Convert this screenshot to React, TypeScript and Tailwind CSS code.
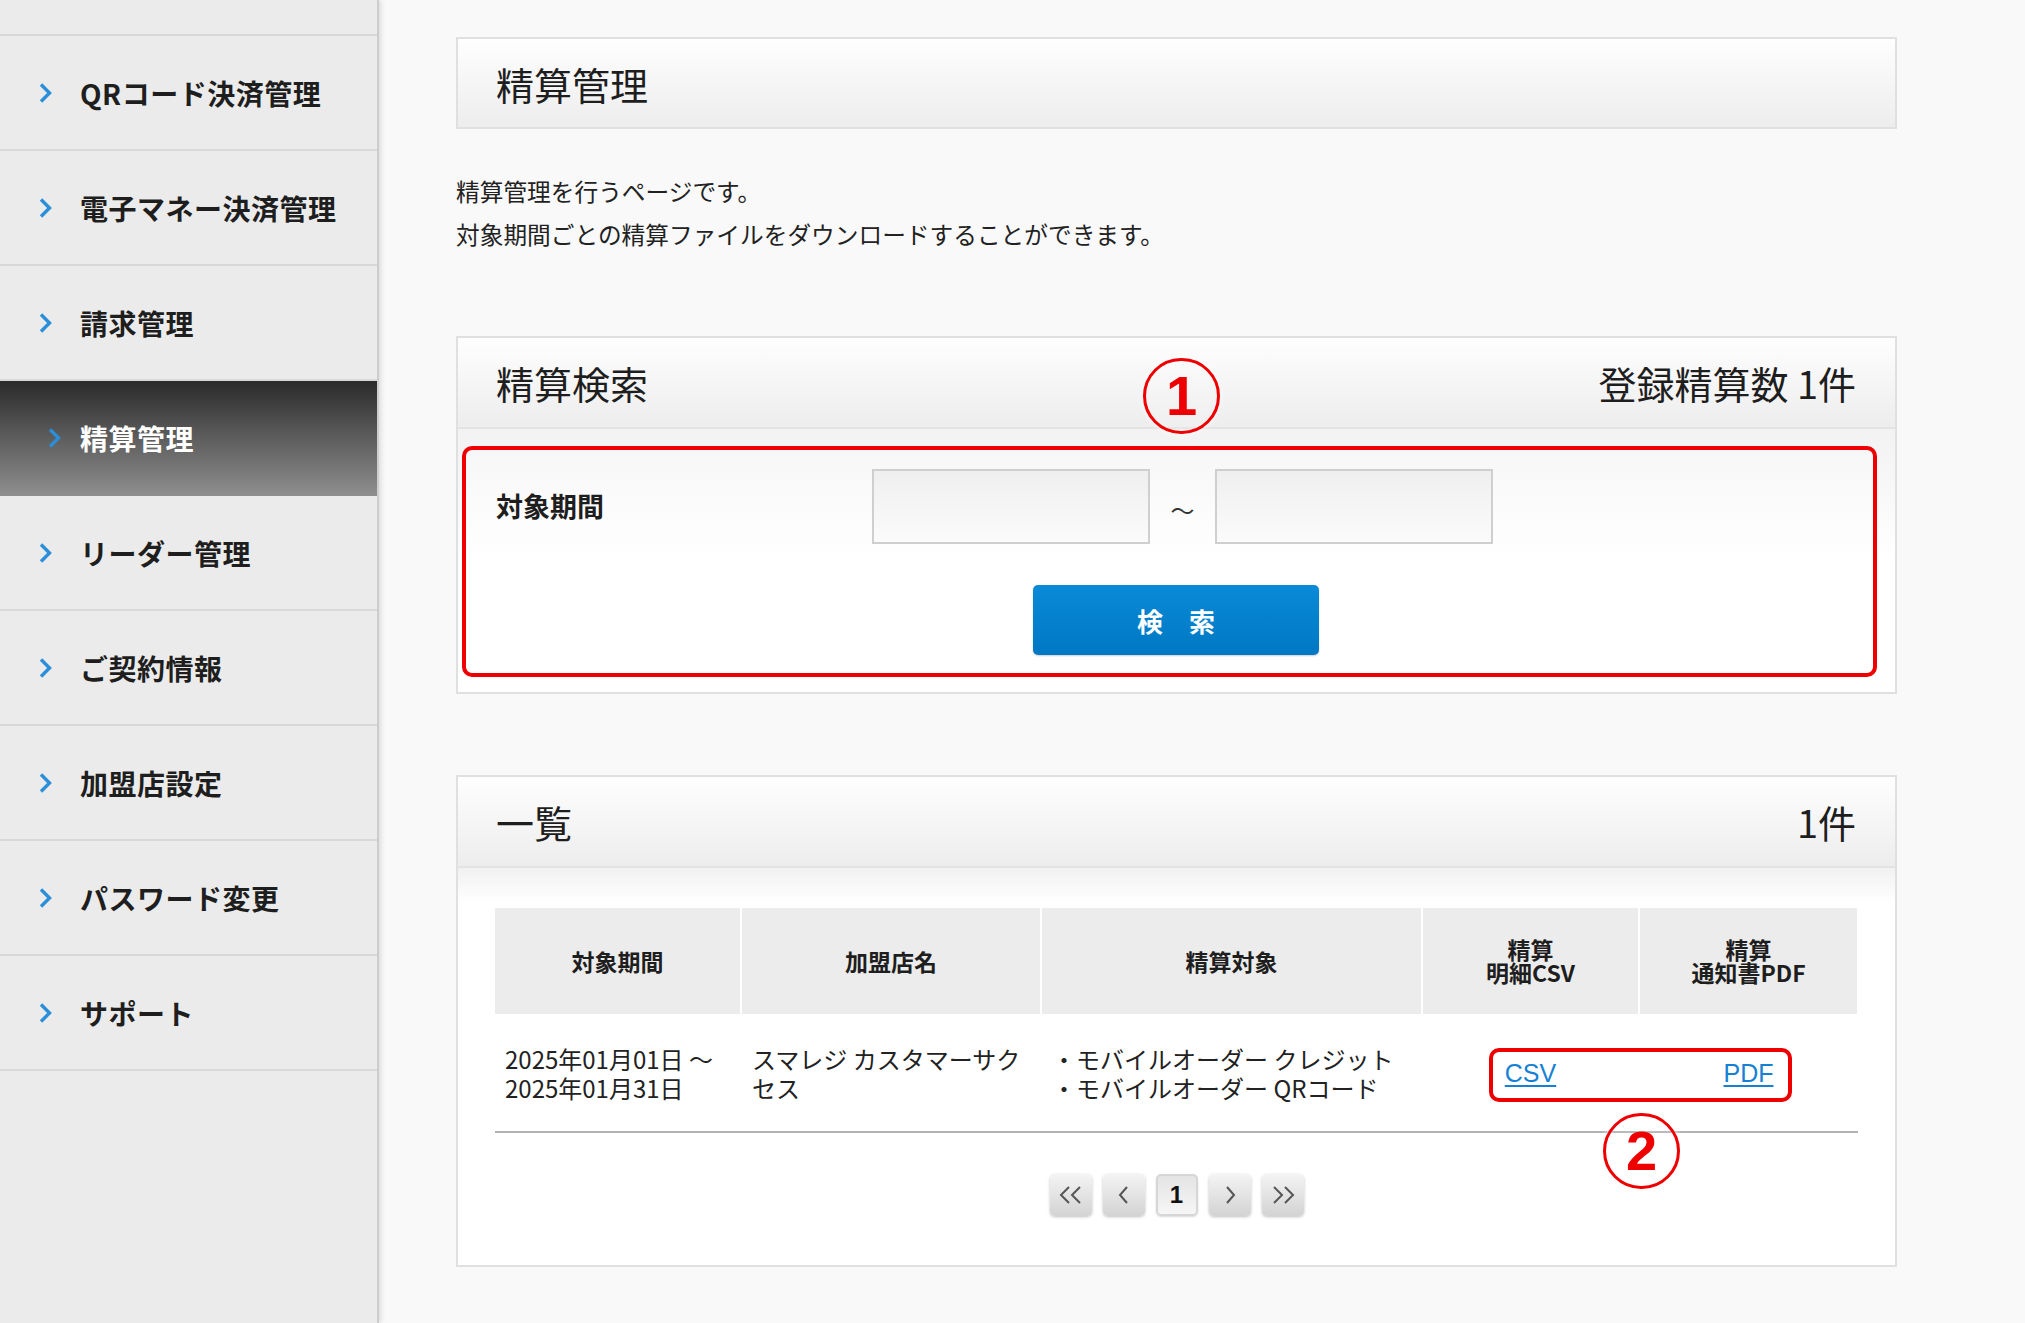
import React from "react";

const navItems = [
  "QRコード決済管理",
  "電子マネー決済管理",
  "請求管理",
  "精算管理",
  "リーダー管理",
  "ご契約情報",
  "加盟店設定",
  "パスワード変更",
  "サポート",
];

function Chevron() {
  return (
    <svg width="16" height="22" viewBox="0 0 16 22" className="shrink-0">
      <path d="M4 2.5 L12.5 11 L4 19.5" stroke="#2a8fd8" strokeWidth="3.4" fill="none" strokeLinecap="butt" strokeLinejoin="miter" />
    </svg>
  );
}

function PageBtn({ children, current }: { children: React.ReactNode; current?: boolean }) {
  return (
    <div
      className={
        current
          ? "w-[42px] h-[42px] rounded-[5px] border-2 border-[#d6d6d6] bg-linear-to-b from-[#e4e4e4] to-[#f6f6f6] flex items-center justify-center shadow-[0_1px_2px_rgba(0,0,0,0.15)]"
          : "w-[42px] h-[42px] rounded-[5px] bg-linear-to-b from-[#f4f4f4] to-[#d3d3d3] flex items-center justify-center shadow-[0_1px_3px_rgba(0,0,0,0.25)]"
      }
    >
      {children}
    </div>
  );
}

function Circled({ n }: { n: string }) {
  return (
    <div className="w-[77px] h-[76px] rounded-full border-[3px] border-[#ee0000] bg-white/10 flex items-center justify-center shadow-[0_0_6px_rgba(255,255,255,0.9)]">
      <span className="font-['Liberation_Sans',sans-serif] font-bold text-[#ee0000] text-[56px] leading-none">{n}</span>
    </div>
  );
}

export default function App() {
  const cols = ["w-[245px]", "w-[298px]", "w-[379px]", "w-[215px]", "w-[217px]"];
  return (
    <div className="flex w-full h-[1323px] overflow-hidden bg-[#f9f9f9] text-[#222] font-['Noto_Sans_CJK_JP','Noto_Sans',sans-serif]">
      {/* Sidebar */}
      <div className="w-[379px] shrink-0 h-full bg-[#ebebeb] border-r-2 border-[#cdcdcd] shadow-[2px_0_5px_rgba(0,0,0,0.12)] flex flex-col">
        <div className="h-[36px] shrink-0 border-b-2 border-[#d8d8d8]" />
        {navItems.map((t) => {
          const active = t === "精算管理";
          return (
            <div
              key={t}
              className={
                active
                  ? "h-[115px] shrink-0 flex items-center pl-[46px] gap-[18px] bg-linear-to-b from-[#2b2b2b] via-[#5d5d5d] to-[#8d8d8d] border-b-2 border-[#8d8d8d]"
                  : "h-[115px] shrink-0 flex items-center pl-[37px] gap-[27px] border-b-2 border-[#d8d8d8]"
              }
            >
              <Chevron />
              <span className={active ? "text-[28px] font-bold text-white tracking-[0.5px]" : "text-[28px] font-bold text-[#1e1e1e] tracking-[0.5px]"}>
                {t}
              </span>
            </div>
          );
        })}
      </div>

      {/* Main */}
      <div className="flex-1 pl-[77px] pt-[37px]">
        {/* Title */}
        <div className="w-[1441px] h-[92px] border-2 border-[#e0e0e0] bg-linear-to-b from-[#fefefe] to-[#ededed] flex items-center pl-[38px]">
          <h1 className="text-[38px] font-normal text-[#1e1e1e]">精算管理</h1>
        </div>

        <div className="mt-[41px] text-[23.7px] leading-[43px] text-[#222]">
          <p>精算管理を行うページです。</p>
          <p>対象期間ごとの精算ファイルをダウンロードすることができます。</p>
        </div>

        {/* Search panel */}
        <div className="relative mt-[80px] w-[1441px] border-2 border-[#e0e0e0] bg-white">
          <div className="h-[91px] border-b-2 border-[#e3e3e3] bg-linear-to-b from-[#fefefe] to-[#ededed] flex items-center justify-between pl-[38px] pr-[39px]">
            <span className="text-[38px] text-[#1e1e1e]">精算検索</span>
            <span className="text-[38px] text-[#1e1e1e]">登録精算数&nbsp;1件</span>
          </div>
          <div className="pt-[17px] pb-[15px] pl-[4px] pr-[18px] bg-linear-to-b from-[#f2f2f2] via-white to-white">
            <div className="h-[231px] border-4 border-[#ee0000] rounded-[10px] pt-[19px] pl-[30px] bg-linear-to-b from-[#f7f7f7] via-white to-white">
              <div className="flex items-center h-[75px]">
                <span className="w-[376px] text-[27px] font-bold text-[#1e1e1e]">対象期間</span>
                <div className="w-[278px] h-[75px] border-2 border-[#cfcfcf] bg-linear-to-b from-[#efefef] to-[#fbfbfb]" />
                <span className="w-[65px] text-center text-[24px] text-[#333] pt-[6px]">～</span>
                <div className="w-[278px] h-[75px] border-2 border-[#cfcfcf] bg-linear-to-b from-[#efefef] to-[#fbfbfb]" />
              </div>
              <div className="mt-[41px] ml-[537px] w-[286px] h-[70px] rounded-[5px] bg-linear-to-b from-[#0a8ad7] to-[#0078c3] flex items-center justify-center shadow-[0_1px_2px_rgba(0,0,0,0.2)]">
                <span className="text-white text-[26px] font-bold">検　索</span>
              </div>
            </div>
          </div>
          <div className="absolute left-[685px] top-[20px]">
            <Circled n="1" />
          </div>
        </div>

        {/* List panel */}
        <div className="relative mt-[81px] w-[1441px] border-2 border-[#e0e0e0] bg-white">
          <div className="h-[91px] border-b-2 border-[#e3e3e3] bg-linear-to-b from-[#fefefe] to-[#ededed] flex items-center justify-between pl-[38px] pr-[39px]">
            <span className="text-[38px] text-[#1e1e1e]">一覧</span>
            <span className="text-[38px] text-[#1e1e1e]">1件</span>
          </div>
          <div className="h-[35px] bg-linear-to-b from-[#f1f1f1] to-white" />
          <div className="pt-[5px] px-[37px]">
            <div className="flex gap-[2px]">
              {[
                ["対象期間"],
                ["加盟店名"],
                ["精算対象"],
                ["精算", "明細CSV"],
                ["精算", "通知書PDF"],
              ].map((lines, i) => (
                <div key={i} className={`${cols[i]} h-[106px] bg-[#ececec] flex flex-col items-center justify-center text-[23px] font-bold leading-[23px] text-[#1e1e1e]`}>
                  {lines.map((l) => (
                    <span key={l}>{l}</span>
                  ))}
                </div>
              ))}
            </div>
            <div className="flex gap-[2px] h-[119px] border-b-2 border-[#b2b2b2] items-center text-[24px] leading-[29px] text-[#222]">
              <div className={`${cols[0]} pl-[10px] whitespace-nowrap`}>
                <div>2025年01月01日 〜</div>
                <div>2025年01月31日</div>
              </div>
              <div className={`${cols[1]} pl-[10px] pr-[4px] whitespace-nowrap`}>
                <div>スマレジ カスタマーサク</div>
                <div>セス</div>
              </div>
              <div className={`${cols[2]} pl-[10px] whitespace-nowrap`}>
                <div>・モバイルオーダー クレジット</div>
                <div>・モバイルオーダー QRコード</div>
              </div>
              <div className={`${cols[3]} text-center`}>
                <a className="text-[#1681d4] underline underline-offset-[3px] font-['Liberation_Sans',sans-serif] text-[25px]">CSV</a>
              </div>
              <div className={`${cols[4]} text-center`}>
                <a className="text-[#1681d4] underline underline-offset-[3px] font-['Liberation_Sans',sans-serif] text-[25px]">PDF</a>
              </div>
            </div>
            <div className="mt-[41px] pb-[49px] flex justify-center gap-[11px]">
              <PageBtn>
                <svg width="26" height="20" viewBox="0 0 26 20">
                  <path d="M11 2 L3 10 L11 18 M22 2 L14 10 L22 18" stroke="#555" strokeWidth="2" fill="none" />
                </svg>
              </PageBtn>
              <PageBtn>
                <svg width="14" height="20" viewBox="0 0 14 20">
                  <path d="M10 2 L3 10 L10 18" stroke="#555" strokeWidth="2" fill="none" />
                </svg>
              </PageBtn>
              <PageBtn current>
                <span className="font-['Liberation_Sans',sans-serif] font-bold text-[24px] text-[#111] leading-none">1</span>
              </PageBtn>
              <PageBtn>
                <svg width="14" height="20" viewBox="0 0 14 20">
                  <path d="M4 2 L11 10 L4 18" stroke="#555" strokeWidth="2" fill="none" />
                </svg>
              </PageBtn>
              <PageBtn>
                <svg width="26" height="20" viewBox="0 0 26 20">
                  <path d="M4 2 L12 10 L4 18 M15 2 L23 10 L15 18" stroke="#555" strokeWidth="2" fill="none" />
                </svg>
              </PageBtn>
            </div>
          </div>
          <div className="absolute left-[1031px] top-[271px] w-[303px] h-[54px] border-4 border-[#ee0000] rounded-[10px]" />
          <div className="absolute left-[1145px] top-[336px]">
            <Circled n="2" />
          </div>
        </div>
      </div>
    </div>
  );
}
